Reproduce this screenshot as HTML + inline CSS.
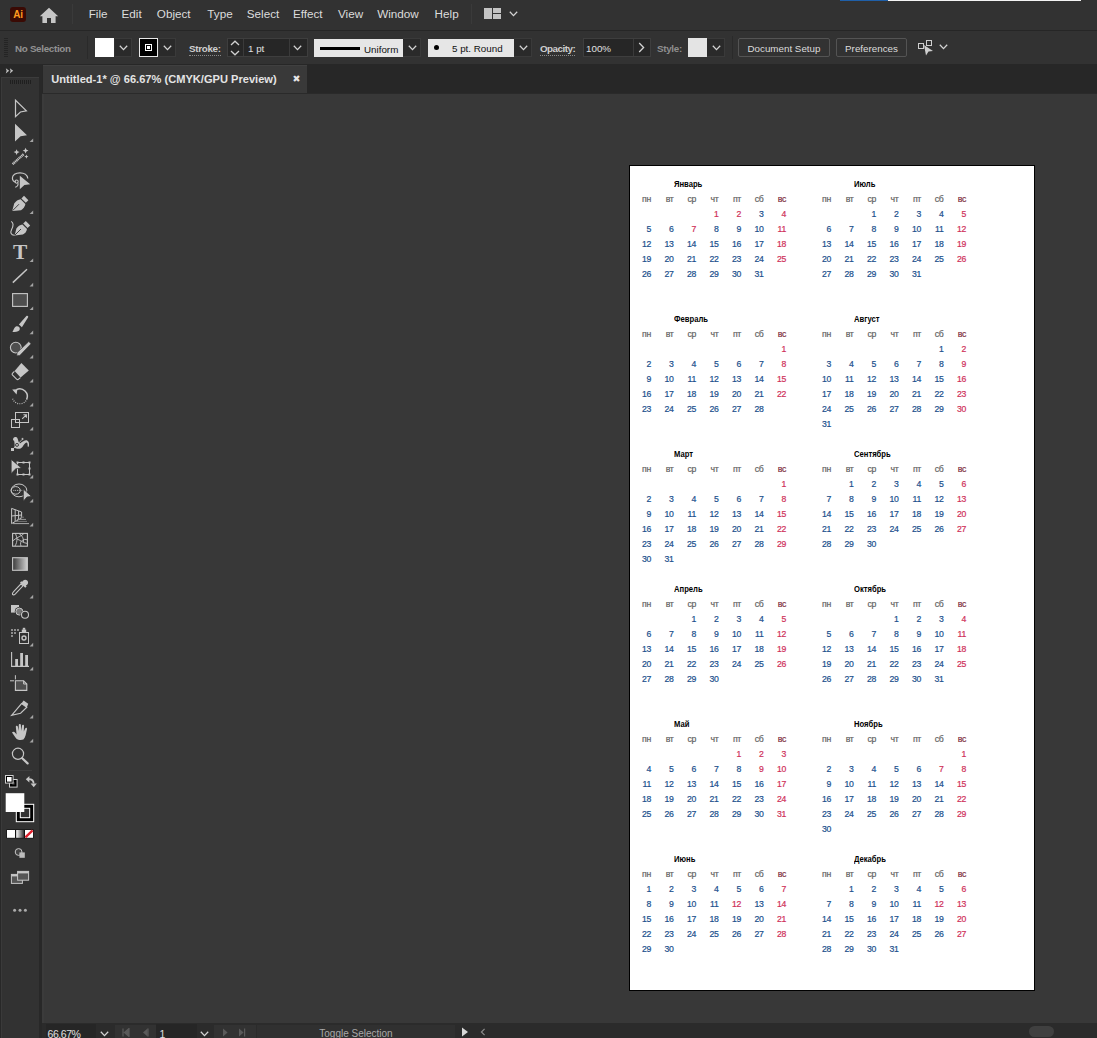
<!DOCTYPE html>
<html lang="ru"><head><meta charset="utf-8"><title>Untitled-1* @ 66.67% (CMYK/GPU Preview)</title>
<style>
*{box-sizing:border-box;margin:0;padding:0}
html,body{width:1097px;height:1038px;overflow:hidden;background:#383838}
body{position:relative;font-family:"Liberation Sans",sans-serif;color:#d8d8d8;font-size:12px}
.abs{position:absolute}
#menubar{position:absolute;left:0;top:0;width:1097px;height:30px;background:#323232}
#menubar .mi{position:absolute;top:4.7px;font-size:11.7px;line-height:18px;color:#dcdcdc;white-space:nowrap}
#ctrl{position:absolute;left:0;top:31px;width:1097px;height:33px;background:#323232}
#ctrl .t{position:absolute;top:11.8px;font-size:9.8px;line-height:12px;white-space:nowrap;color:#cfcfcf}
#ctrl .u{border-bottom:1px dotted #8a8a8a}
#ctrl .dd{position:absolute;top:7px;height:19px;background:#2a2a2a;border:1px solid #3a3a3a;border-left:none}
#ctrl .fld{position:absolute;top:7px;height:19px;background:#262626;border:1px solid #3e3e3e}
#ctrl .lt{position:absolute;top:8px;height:18px;background:#e6e6e6;color:#111}
.chev{position:absolute;width:9px;height:6px}
#tabbar{position:absolute;left:0;top:64px;width:1097px;height:30px;background:#272727}
#tab{position:absolute;left:42.500px;top:0.5px;width:264.500px;height:29.5px;background:#393939;border-top:1px solid #404040}
#tools{position:absolute;left:0;top:64px;width:42px;height:974px;background:#323232;border-right:1px solid #2a2a2a}
#canvas{position:absolute;left:42px;top:94px;width:1055px;border-left:2px solid #3b3b3b;height:929px;background:#383838}
#status{position:absolute;left:42px;top:1023px;width:1055px;height:15px;background:#2b2b2b}
#art{position:absolute;left:629px;top:165px;width:406px;height:826px;background:#fff;border:1px solid #000}
.mo{position:absolute;width:180px;height:120px;font-size:8.7px;line-height:10px}
.mt{position:absolute;left:45.1px;top:13.8px;font-size:9.8px;font-weight:bold;color:#000;white-space:nowrap;transform:scaleX(.78);transform-origin:0 0}
.c{position:absolute;width:22.5px;text-align:right;color:#1a4f8c;margin-left:-0.5px;-webkit-text-stroke:0.2px currentColor;white-space:nowrap;letter-spacing:-0.3px}
.c.r{color:#cf3059}
.c.w{color:#626262}
.c.w.s{color:#7e2f40}
</style></head><body>
<div id="menubar">
  <div class="abs" style="left:840px;top:0;width:48px;height:1px;background:#1f5fa8"></div>
  <div class="abs" style="left:888px;top:0;width:193px;height:1px;background:#f4f4f4"></div>
  <div class="abs" style="left:10px;top:7px;width:16px;height:15px;border-radius:3px;background:#3a0a04;color:#ff9a1f;font-weight:bold;font-size:10px;line-height:15px;text-align:center;letter-spacing:-0.3px">Ai</div>
  <svg class="abs" style="left:39px;top:7px" width="20" height="17" viewBox="0 0 20 17"><path d="M10 0.8 L0.8 9.2 H3.4 V16 H8 V11 H12 V16 H16.6 V9.2 H19.2 Z" fill="#c6c6c6"/></svg>
  <div class="abs" style="left:72px;top:4px;width:1px;height:20px;background:#3a3a3a"></div>
  <span class="mi" style="left:88.7px">File</span>
  <span class="mi" style="left:121.5px">Edit</span>
  <span class="mi" style="left:156.8px">Object</span>
  <span class="mi" style="left:207.3px">Type</span>
  <span class="mi" style="left:246.8px">Select</span>
  <span class="mi" style="left:292.9px">Effect</span>
  <span class="mi" style="left:338px">View</span>
  <span class="mi" style="left:377.2px">Window</span>
  <span class="mi" style="left:434.6px">Help</span>
  <div class="abs" style="left:471px;top:4px;width:1px;height:20px;background:#3a3a3a"></div>
  <div class="abs" style="left:484px;top:8px;width:8px;height:11px;background:#c4c4c4"></div>
  <div class="abs" style="left:493px;top:8px;width:8px;height:5px;background:#c4c4c4"></div>
  <div class="abs" style="left:493px;top:14px;width:8px;height:5px;background:#c4c4c4"></div>
  <svg class="chev" style="left:509px;top:11px" viewBox="0 0 9 6"><path d="M0.8 0.8 L4.5 4.6 L8.2 0.8" fill="none" stroke="#d4d4d4" stroke-width="1.300"/></svg>
</div>
<div class="abs" style="left:0;top:30px;width:1097px;height:1px;background:#262626"></div>
<div id="ctrl">
  <div class="abs" style="left:4px;top:7px;width:4px;height:19px;background:repeating-linear-gradient(#242424 0 1px,transparent 1px 2px)"></div>
  <span class="t" style="left:15px;color:#929292;font-weight:bold;letter-spacing:-0.3px">No Selection</span>
  <div class="abs" style="left:87px;top:5px;width:1px;height:23px;background:#2a2a2a"></div>
  <div class="abs" style="left:95px;top:7px;width:19px;height:19px;background:#fff"></div>
  <div class="dd" style="left:115px;width:17px"></div>
  <svg class="chev" style="left:119px;top:14px" viewBox="0 0 9 6"><path d="M0.8 0.8 L4.5 4.6 L8.2 0.8" fill="none" stroke="#d4d4d4" stroke-width="1.300"/></svg>
  <div class="abs" style="left:139px;top:7px;width:19px;height:19px;background:#000;border:1px solid #e8e8e8"></div>
  <div class="abs" style="left:145px;top:13px;width:7px;height:7px;border:1px solid #fff;background:#000"></div>
  <div class="abs" style="left:147px;top:15px;width:3px;height:3px;background:#fff"></div>
  <div class="dd" style="left:159px;width:17px"></div>
  <svg class="chev" style="left:163px;top:14px" viewBox="0 0 9 6"><path d="M0.8 0.8 L4.5 4.6 L8.2 0.8" fill="none" stroke="#d4d4d4" stroke-width="1.300"/></svg>
  <span class="t u" style="left:189px;font-weight:bold;letter-spacing:-0.3px">Stroke:</span>
  <div class="fld" style="left:227px;width:81px"></div>
  <div class="abs" style="left:243px;top:8px;width:1px;height:17px;background:#3a3a3a"></div>
  <div class="abs" style="left:289px;top:8px;width:1px;height:17px;background:#3a3a3a"></div>
  <svg class="abs" style="left:230px;top:9px" width="10" height="16" viewBox="0 0 10 16"><path d="M1 5 L5 1.2 L9 5 M1 11 L5 14.8 L9 11" fill="none" stroke="#d0d0d0" stroke-width="1.3"/></svg>
  <span class="t" style="left:248px;color:#e0e0e0">1 pt</span>
  <svg class="chev" style="left:293px;top:14px" viewBox="0 0 9 6"><path d="M0.8 0.8 L4.5 4.6 L8.2 0.8" fill="none" stroke="#d4d4d4" stroke-width="1.300"/></svg>
  <div class="lt" style="left:314px;width:89px"></div>
  <div class="abs" style="left:320px;top:16px;width:40px;height:3px;background:#000"></div>
  <span class="t" style="left:364px;top:12.800px;color:#111">Uniform</span>
  <div class="dd" style="left:403px;width:18px"></div>
  <svg class="chev" style="left:408px;top:14px" viewBox="0 0 9 6"><path d="M0.8 0.8 L4.5 4.6 L8.2 0.8" fill="none" stroke="#d4d4d4" stroke-width="1.300"/></svg>
  <div class="lt" style="left:428px;width:86px"></div>
  <div class="abs" style="left:434px;top:14px;width:5px;height:5px;border-radius:50%;background:#000"></div>
  <span class="t" style="left:452px;color:#111">5 pt. Round</span>
  <div class="dd" style="left:514px;width:18px"></div>
  <svg class="chev" style="left:519px;top:14px" viewBox="0 0 9 6"><path d="M0.8 0.8 L4.5 4.6 L8.2 0.8" fill="none" stroke="#d4d4d4" stroke-width="1.300"/></svg>
  <span class="t u" style="left:540px;font-weight:bold;letter-spacing:-0.5px">Opacity:</span>
  <div class="fld" style="left:583px;width:68px"></div>
  <div class="abs" style="left:633px;top:8px;width:1px;height:17px;background:#3a3a3a"></div>
  <span class="t" style="left:586px;color:#e0e0e0">100%</span>
  <svg class="abs" style="left:638px;top:11px" width="7" height="11" viewBox="0 0 7 11"><path d="M1.2 1 L5.6 5.5 L1.2 10" fill="none" stroke="#d4d4d4" stroke-width="1.300"/></svg>
  <span class="t" style="left:657px;color:#8f8f8f;font-weight:bold;letter-spacing:-0.3px">Style:</span>
  <div class="abs" style="left:688px;top:7px;width:19px;height:19px;background:#e4e4e4"></div>
  <div class="dd" style="left:707px;width:18px"></div>
  <svg class="chev" style="left:712px;top:14px" viewBox="0 0 9 6"><path d="M0.8 0.8 L4.5 4.6 L8.2 0.8" fill="none" stroke="#d4d4d4" stroke-width="1.300"/></svg>
  <div class="abs" style="left:732px;top:5px;width:1px;height:23px;background:#2a2a2a"></div>
  <div class="abs" style="left:738px;top:7px;width:92px;height:19px;border:1px solid #545454;border-radius:2px;font-size:9.8px;line-height:19px;text-align:center;color:#dcdcdc">Document Setup</div>
  <div class="abs" style="left:836px;top:7px;width:71px;height:19px;border:1px solid #545454;border-radius:2px;font-size:9.8px;line-height:19px;text-align:center;color:#dcdcdc">Preferences</div>
  <svg class="abs" style="left:916px;top:7px" width="19" height="19" viewBox="0 0 19 19"><rect x="2.5" y="5.5" width="5" height="5" fill="none" stroke="#cfcfcf"/><rect x="10.500" y="2.500" width="5" height="5" fill="none" stroke="#cfcfcf"/><path d="M8 7 L17 13 L12.500 13.500 L10 17.500 Z" fill="#cfcfcf"/></svg>
  <svg class="chev" style="left:939px;top:13px" viewBox="0 0 9 6"><path d="M0.8 0.8 L4.5 4.6 L8.2 0.8" fill="none" stroke="#d4d4d4" stroke-width="1.300"/></svg>
</div>
<div id="tabbar">
  <div id="tab"></div>
  <span class="abs" style="left:51.3px;top:8px;font-size:11.1px;line-height:14px;font-weight:bold;color:#e4e4e4;white-space:nowrap">Untitled-1* @ 66.67% (CMYK/GPU Preview)</span>
  <span class="abs" style="left:292.600px;top:8px;font-size:9.500px;line-height:14px;font-family:'DejaVu Sans',sans-serif;color:#e6e6e6">✖</span>
</div>
<div class="abs" style="left:0;top:93px;width:1097px;height:1px;background:#2a2a2a"></div>
<div id="canvas"></div>
<div class="abs" style="left:0;top:64px;width:42px;height:974px;background:#282828"></div>
<div class="abs" style="left:1px;top:77px;width:38px;height:961px;background:#323232;border-top:1px solid #3c3c3c;border-left:1px solid #3a3a3a"></div>
<div class="abs" style="left:10px;top:80px;width:21px;height:4px;background:repeating-linear-gradient(90deg,#1f1f1f 0 1px,transparent 1px 2px)"></div>
<svg class="abs" style="left:5px;top:68px" width="10" height="6" viewBox="0 0 10 6"><path d="M0.800 0.200 L4.200 2.800 L0.800 5.400 L1.600 2.800 Z M4.800 0.200 L8.200 2.800 L4.800 5.400 L5.600 2.800 Z" fill="#c0c0c0"/></svg>
<svg class="abs" style="left:0;top:0" width="44" height="1038" viewBox="0 0 44 1038">
<path d="M15.5 100.2 L26.4 110.9 L20.4 112 L15.5 116.6 Z" fill="none" stroke="#c6c6c6" stroke-width="1.2" stroke-linejoin="miter"/>
<path d="M15 123.8 L27 135.2 L20.6 136.2 L15 141.4 Z" fill="#c6c6c6"/><path d="M33.2 138.4 V142.0 H29.6 Z" fill="#a4a4a4"/>
<path d="M12.6 164.2 L23.6 154.2" stroke="#c6c6c6" stroke-width="2.4" stroke-dasharray="1.2 0.5"/><path d="M16.6 149.2 l0.9 2 2.1 0.9 -2.1 0.9 -0.9 2.1 -0.9 -2.1 -2.1 -0.9 2.1 -0.9z M25.6 147.8 l0.9 1.9 2 0.9 -2 0.9 -0.9 2 -0.9 -2 -2 -0.9 2 -0.9z M26.4 154.6 l0.6 1.4 1.5 0.6 -1.5 0.6 -0.6 1.5 -0.6 -1.5 -1.5 -0.6 1.5 -0.6z" fill="#c6c6c6"/>
<path d="M27.8 178.5 C27.5 174.8 24 172.8 20 172.8 C15.5 172.800 12.4 175.200 12.4 178 C12.4 180.300 14 181.800 16 182.200" fill="none" stroke="#c6c6c6" stroke-width="1.2"/><circle cx="16.600" cy="181.600" r="1.6" fill="none" stroke="#c6c6c6" stroke-width="1.1"/><path d="M17.800 182.600 C18.600 184.600 17.600 186.600 15.200 187.200" fill="none" stroke="#c6c6c6" stroke-width="1.1"/><path d="M19.800 175.800 L30.200 184.200 L24.400 185 L19.800 189.200 Z" fill="#c6c6c6"/>
<path d="M12.200 211 L14.200 203.600 C15.600 201 18.400 199.600 20.600 199.200 L25.400 204 C25 206.400 23.400 209 21 210.200 Z" fill="#c6c6c6"/><path d="M21.400 198.400 L24 195.800 L28.400 200.200 L25.800 202.800 Z" fill="#c6c6c6"/><path d="M12.600 210.600 L19 204.200" stroke="#333" stroke-width="0.9"/><path d="M33.2 210.4 V214.0 H29.6 Z" fill="#a4a4a4"/>
<path d="M14.600 235.400 L16.400 228.400 C17.800 226 20.200 224.800 22.400 224.400 L27 229 C26.600 231.200 25.200 233.600 22.800 234.600 Z" fill="#c6c6c6"/><path d="M23.200 223.600 L25.800 221 L30.200 225.400 L27.600 228 Z" fill="#c6c6c6"/><path d="M15 235 L21 229" stroke="#333" stroke-width="0.9"/><path d="M11.200 221.400 C14.400 223.400 13.200 226.400 11.600 229.400 C10 232.600 11 235.400 14.600 235.200" fill="none" stroke="#c6c6c6" stroke-width="1.1"/>
<text x="20.100" y="258.900" font-family="Liberation Serif, serif" font-size="20.600" font-weight="bold" text-anchor="middle" fill="#c6c6c6" transform="translate(20.100 0) scale(1.040 1) translate(-20.100 0)">T</text><path d="M33.2 258.4 V262.0 H29.6 Z" fill="#a4a4a4"/>
<path d="M12.800 282.600 L27 269.200" stroke="#c6c6c6" stroke-width="1.5"/><path d="M33.2 282.8 V286.4 H29.6 Z" fill="#a4a4a4"/>
<rect x="12.600" y="293.600" width="14.800" height="12.800" fill="#4e4e4e" stroke="#c6c6c6" stroke-width="1.1"/><path d="M33.2 306.4 V310.0 H29.6 Z" fill="#a4a4a4"/>
<path d="M18.900 324.600 L26.400 316 C27.400 315 28.800 316.200 28 317.400 L21.900 327.200 Z" fill="#c6c6c6"/><path d="M12.200 331.800 C13.800 330.800 13.600 327.600 16 326.400 C17.800 325.600 20.200 327 19.800 329.200 C19.400 331.400 16 332.400 12.200 331.800 Z" fill="#c6c6c6"/><path d="M33.2 330.6 V334.2 H29.6 Z" fill="#a4a4a4"/>
<circle cx="15.800" cy="347.600" r="5.400" fill="#4e4e4e" stroke="#c6c6c6" stroke-width="1.1"/><path d="M17 352.800 L28.800 341.600 L31 343.800 L19.800 355.400 L16.800 355.800 Z" fill="#c6c6c6" stroke="#333" stroke-width="0.600"/><path d="M33.2 354.8 V358.4 H29.6 Z" fill="#a4a4a4"/>
<path d="M21.400 363 L28.800 370.400 L20.600 377.600 L14.600 371 Z" fill="#c6c6c6"/><path d="M14.400 371.400 L12.600 373.200 C12 373.800 12 374.600 12.600 375.200 L16.600 379.200 C17.200 379.800 18 379.800 18.600 379.200 L20.400 377.600" fill="none" stroke="#c6c6c6" stroke-width="1.100"/><path d="M33.2 378.8 V382.4 H29.6 Z" fill="#a4a4a4"/>
<path d="M16.400 389.600 A7.600 7.600 0 0 1 26.600 399.600" fill="none" stroke="#c6c6c6" stroke-width="1.500"/><path d="M26 400.600 A7.600 7.600 0 0 1 12.400 397.800" fill="none" stroke="#c6c6c6" stroke-width="1.200" stroke-dasharray="0.900 1.300"/><path d="M12.200 389.400 L17.400 389.200 L16.600 394.600 Z" fill="#c6c6c6"/><path d="M33.2 402.8 V406.4 H29.6 Z" fill="#a4a4a4"/>
<rect x="15.500" y="412.500" width="13" height="10" fill="none" stroke="#c6c6c6" stroke-width="1"/><rect x="11.500" y="419.500" width="8" height="8" fill="none" stroke="#c6c6c6" stroke-width="1"/><path d="M22.200 418.800 L26 415.200 M23.400 414.800 H26.400 V417.800" fill="none" stroke="#c6c6c6" stroke-width="1.100"/><path d="M33.2 426.8 V430.4 H29.6 Z" fill="#a4a4a4"/>
<path d="M13.200 440.800 C12.400 438 14.200 436.600 16 437 C17.600 437.400 18 439.600 18.600 441.800 C19 443 19.600 443.600 20.600 443 C22.600 441.400 25.200 439.600 27.200 440.400 C29 441.200 29.400 443.800 28.800 446.800 L27.600 446.600 C27.800 444.400 27.600 442.800 26.600 442.600 C25 442.600 24 445 22.400 447 C21 448.800 18.600 449.200 16.400 448.600 L14.400 447.800 C14.800 445.600 14.600 443 14.200 441.200 C14 440.200 13.600 439.800 13.200 440.800 Z" fill="#c6c6c6"/><path d="M13.400 448.600 L22.600 439" stroke="#c6c6c6" stroke-width="0.900"/><circle cx="17" cy="444.900" r="1.500" fill="#c6c6c6" stroke="#333" stroke-width="0.900"/><circle cx="22.500" cy="439" r="1.300" fill="#c6c6c6" stroke="#333" stroke-width="0.600"/><rect x="11" y="448" width="3" height="3" fill="#c6c6c6"/><path d="M33.2 450.8 V454.4 H29.6 Z" fill="#a4a4a4"/>
<rect x="17.500" y="462.500" width="12" height="12" fill="none" stroke="#c6c6c6" stroke-width="1"/><path d="M16.500 461.500 h2 v2 h-2z M22.500 461.500 h2 v2 h-2z M28.500 461.500 h2 v2 h-2z M28.500 467.500 h2 v2 h-2z M28.500 473.500 h2 v2 h-2z M22.500 473.500 h2 v2 h-2z M16.500 473.500 h2 v2 h-2z" fill="#c6c6c6"/><path d="M11.200 459.400 L21.400 468 L15.800 468.800 L11.200 473.400 Z" fill="#c6c6c6" stroke="#323232" stroke-width="0.700"/><path d="M33.2 474.8 V478.4 H29.6 Z" fill="#a4a4a4"/>
<ellipse cx="19" cy="490.400" rx="7.800" ry="6.400" fill="none" stroke="#c6c6c6" stroke-width="1"/><ellipse cx="15.700" cy="490.400" rx="4.600" ry="3.800" fill="none" stroke="#c6c6c6" stroke-width="1"/><path d="M13.400 490.400 H22.600" stroke="#c6c6c6" stroke-width="1" stroke-dasharray="0.900 0.900"/><path d="M23.300 489 L31.600 496.400 L27 497 L23.300 501.200 Z" fill="#c6c6c6" stroke="#323232" stroke-width="0.800"/><path d="M33.2 498.8 V502.4 H29.6 Z" fill="#a4a4a4"/>
<path d="M11.600 508.400 L21.600 512 V518 L11.600 523.600 Z M15.200 509.800 V521.600 M18.600 511 V519.600 M11.600 516 L21.600 515" fill="none" stroke="#c6c6c6" stroke-width="1"/><path d="M20 517.200 H24" stroke="#777" stroke-width="1"/><path d="M17 519.400 H26" stroke="#999" stroke-width="1"/><path d="M13 523.600 H29" stroke="#aaa" stroke-width="1"/><path d="M15 521.400 H27" stroke="#888" stroke-width="0.800"/><path d="M33.2 522.8 V526.4 H29.6 Z" fill="#a4a4a4"/>
<rect x="12.600" y="533.400" width="14.800" height="12.800" fill="none" stroke="#c6c6c6" stroke-width="1.100"/><path d="M12.600 541 C17 537 22 536 24 533.400 M15 546 C18 541 17 537 15.400 533.600 M21 546 C19 541 24 538 27.400 540 M17 539 C20 540 23 543 27 543.400 M19 533.600 C22 535 24 539 23.600 542" fill="none" stroke="#c6c6c6" stroke-width="0.900"/>
<defs><linearGradient id="gg" x1="0" x2="1" y1="0" y2="0"><stop offset="0" stop-color="#3a3a3a"/><stop offset="1" stop-color="#d0d0d0"/></linearGradient></defs><rect x="12.600" y="557.700" width="14.800" height="12.600" fill="url(#gg)" stroke="#c6c6c6" stroke-width="1.100"/>
<path d="M12.600 594.600 C12 593.600 12.600 592.600 13.400 591.800 L21 583.800 L23 585.800 L15.400 593.800 C14.600 594.600 13.600 595.200 12.600 594.600 Z" fill="none" stroke="#c6c6c6" stroke-width="1.100"/><path d="M20 582.600 L21.400 581.200 L22.200 582 C22.800 580 25.400 578.800 27.200 580.600 C29 582.400 27.800 585 25.800 585.600 L26.600 586.400 L25.200 587.800 Z" fill="#c6c6c6"/><path d="M33.2 594.8 V598.4 H29.6 Z" fill="#a4a4a4"/>
<rect x="11" y="605" width="8" height="7.600" fill="#c6c6c6"/><circle cx="19.400" cy="611.600" r="4.600" fill="#323232"/><circle cx="19.400" cy="611.600" r="3.500" fill="#777" stroke="#c6c6c6" stroke-width="1"/><circle cx="25" cy="614.800" r="4.600" fill="#323232"/><circle cx="25" cy="614.800" r="3.500" fill="#323232" stroke="#c6c6c6" stroke-width="1.100"/>
<rect x="19.500" y="632.500" width="9" height="11" fill="none" stroke="#c6c6c6" stroke-width="1"/><rect x="21.800" y="629.600" width="4.400" height="3" fill="#c6c6c6"/><rect x="22.800" y="627.800" width="2.400" height="2" fill="#c6c6c6"/><circle cx="24" cy="638" r="2" fill="none" stroke="#c6c6c6" stroke-width="1.400"/><path d="M11 629 h2 v2 h-2z M14 629 h2 v2 h-2z M17 629 h2 v2 h-2z M11 632 h2 v2 h-2z M14 632 h2 v2 h-2z M11 635 h2 v2 h-2z" fill="#8c8c8c"/><path d="M33.2 642.8 V646.4 H29.6 Z" fill="#a4a4a4"/>
<path d="M11.600 652 V666.400 H29" fill="none" stroke="#c6c6c6" stroke-width="1.100"/><rect x="15.200" y="659" width="2.800" height="7" fill="#c6c6c6"/><rect x="20.200" y="653" width="2.800" height="13" fill="#c6c6c6"/><rect x="25.200" y="655" width="2.800" height="11" fill="#c6c6c6"/><path d="M33.2 666.8 V670.4 H29.6 Z" fill="#a4a4a4"/>
<path d="M15.400 680.800 H23.600 L26.800 684 V690.400 H15.400 Z" fill="#4e4e4e" stroke="#c6c6c6" stroke-width="1.100"/><path d="M23.600 680.800 V684 H26.800" fill="none" stroke="#c6c6c6" stroke-width="1"/><path d="M15.400 675.200 V679.400 M10 680.800 H14" stroke="#c6c6c6" stroke-width="1"/>
<path d="M11.600 715.400 L21.600 703.600 L26.800 707.200 L20.600 713.200 Z" fill="none" stroke="#c6c6c6" stroke-width="1.100"/><path d="M21.400 703.400 L23.600 700.600 L28.200 703.800 L26.800 707.400 Z" fill="#c6c6c6"/><path d="M33.2 714.8 V718.4 H29.6 Z" fill="#a4a4a4"/>
<path d="M18.400 739.800 C16 739 14.600 736 12 732.400 C13 731.400 14.400 731.800 15.400 733 L16.600 734.600 L15.800 726.800 C15.700 725.400 17.500 725.200 17.800 726.600 L18.600 731 L18.800 725 C18.800 723.600 20.800 723.600 20.900 725 L21.200 731 L22 725.800 C22.200 724.400 24.100 724.600 24 726 L23.800 731.600 L25.200 728.400 C25.800 727.200 27.400 727.800 27 729.200 C26 733 25.800 737 23.400 739.600 C22 740.200 20 740.200 18.400 739.800 Z" fill="#c6c6c6"/><path d="M33.2 738.8 V742.4 H29.6 Z" fill="#a4a4a4"/>
<circle cx="18" cy="753.800" r="5.600" fill="none" stroke="#c6c6c6" stroke-width="1.200"/><path d="M22.200 758.200 L27.600 763.400" stroke="#c6c6c6" stroke-width="2.200" stroke-linecap="round"/>
<path d="M9 770.500 H32" stroke="#3e3e3e" stroke-width="1"/>
<rect x="9.500" y="779.500" width="7.600" height="7.600" fill="#000" stroke="#d0d0d0" stroke-width="1"/><rect x="12.200" y="782.200" width="2.400" height="2.400" fill="#444"/><rect x="5.500" y="775.500" width="7.600" height="7.600" fill="#000" stroke="#d0d0d0" stroke-width="1"/><rect x="7" y="777" width="4.600" height="4.600" fill="#fff"/>
<path d="M28.600 779.200 C31.600 779.200 33.600 781 33.600 783.600" fill="none" stroke="#c6c6c6" stroke-width="1.800"/><path d="M25.800 779.200 L29.400 776 V782.400 Z" fill="#c6c6c6"/><path d="M30.600 783.400 H36.800 L33.700 787.200 Z" fill="#c6c6c6"/>
<rect x="16.300" y="804.300" width="17.400" height="17.400" fill="#000" stroke="#fff" stroke-width="1"/><rect x="20.300" y="808.300" width="9.400" height="9.400" fill="#323232" stroke="#fff" stroke-width="1"/>
<rect x="5.700" y="793.200" width="18.600" height="18.800" fill="#fff"/>
<rect x="6.400" y="829.400" width="27.200" height="9" fill="#111"/><rect x="7" y="830" width="8" height="7.800" fill="#fff"/><rect x="16.200" y="830" width="7.800" height="7.800" fill="url(#g2)"/><defs><linearGradient id="g2" x1="0" x2="1"><stop offset="0" stop-color="#fff"/><stop offset="1" stop-color="#333"/></linearGradient></defs><rect x="25" y="830" width="8" height="7.800" fill="#fff"/><path d="M25.400 837.400 L32.600 830.400" stroke="#e0202c" stroke-width="2.300"/>
<circle cx="18.600" cy="852" r="3.400" fill="#444" stroke="#c6c6c6" stroke-width="1"/><rect x="19.400" y="852.400" width="5.400" height="5.400" fill="#bdbdbd"/>
<rect x="11.400" y="874.400" width="11" height="9" fill="#555" stroke="#c6c6c6" stroke-width="1"/><rect x="11.400" y="874.400" width="11" height="2" fill="#c6c6c6"/><rect x="17.600" y="871.400" width="11" height="8.800" fill="#555" stroke="#c6c6c6" stroke-width="1"/><rect x="17.600" y="871.400" width="11" height="2" fill="#c6c6c6"/>
<circle cx="14.600" cy="910.200" r="1.500" fill="#ababab"/><circle cx="20" cy="910.200" r="1.500" fill="#ababab"/><circle cx="25.400" cy="910.200" r="1.500" fill="#ababab"/>
</svg>
<div id="art"></div>
<div class="mo" style="left:629px;top:165px">
<div class="mt">Январь</div>
<span class="c w" style="left:0.0px;top:28.8px">пн</span><span class="c w" style="left:22.5px;top:28.8px">вт</span><span class="c w" style="left:45.0px;top:28.8px">ср</span><span class="c w" style="left:67.5px;top:28.8px">чт</span><span class="c w" style="left:90.0px;top:28.8px">пт</span><span class="c w" style="left:112.5px;top:28.8px">сб</span><span class="c w s" style="left:135.0px;top:28.8px">вс</span><span class="c r" style="left:67.5px;top:43.8px">1</span><span class="c r" style="left:90.0px;top:43.8px">2</span><span class="c" style="left:112.5px;top:43.8px">3</span><span class="c r" style="left:135.0px;top:43.8px">4</span><span class="c" style="left:0.0px;top:58.8px">5</span><span class="c" style="left:22.5px;top:58.8px">6</span><span class="c r" style="left:45.0px;top:58.8px">7</span><span class="c" style="left:67.5px;top:58.8px">8</span><span class="c" style="left:90.0px;top:58.8px">9</span><span class="c" style="left:112.5px;top:58.8px">10</span><span class="c r" style="left:135.0px;top:58.8px">11</span><span class="c" style="left:0.0px;top:73.8px">12</span><span class="c" style="left:22.5px;top:73.8px">13</span><span class="c" style="left:45.0px;top:73.8px">14</span><span class="c" style="left:67.5px;top:73.8px">15</span><span class="c" style="left:90.0px;top:73.8px">16</span><span class="c" style="left:112.5px;top:73.8px">17</span><span class="c r" style="left:135.0px;top:73.8px">18</span><span class="c" style="left:0.0px;top:88.8px">19</span><span class="c" style="left:22.5px;top:88.8px">20</span><span class="c" style="left:45.0px;top:88.8px">21</span><span class="c" style="left:67.5px;top:88.8px">22</span><span class="c" style="left:90.0px;top:88.8px">23</span><span class="c" style="left:112.5px;top:88.8px">24</span><span class="c r" style="left:135.0px;top:88.8px">25</span><span class="c" style="left:0.0px;top:103.8px">26</span><span class="c" style="left:22.5px;top:103.8px">27</span><span class="c" style="left:45.0px;top:103.8px">28</span><span class="c" style="left:67.5px;top:103.8px">29</span><span class="c" style="left:90.0px;top:103.8px">30</span><span class="c" style="left:112.5px;top:103.8px">31</span>
</div>
<div class="mo" style="left:629px;top:300px">
<div class="mt">Февраль</div>
<span class="c w" style="left:0.0px;top:28.8px">пн</span><span class="c w" style="left:22.5px;top:28.8px">вт</span><span class="c w" style="left:45.0px;top:28.8px">ср</span><span class="c w" style="left:67.5px;top:28.8px">чт</span><span class="c w" style="left:90.0px;top:28.8px">пт</span><span class="c w" style="left:112.5px;top:28.8px">сб</span><span class="c w s" style="left:135.0px;top:28.8px">вс</span><span class="c r" style="left:135.0px;top:43.8px">1</span><span class="c" style="left:0.0px;top:58.8px">2</span><span class="c" style="left:22.5px;top:58.8px">3</span><span class="c" style="left:45.0px;top:58.8px">4</span><span class="c" style="left:67.5px;top:58.8px">5</span><span class="c" style="left:90.0px;top:58.8px">6</span><span class="c" style="left:112.5px;top:58.8px">7</span><span class="c r" style="left:135.0px;top:58.8px">8</span><span class="c" style="left:0.0px;top:73.8px">9</span><span class="c" style="left:22.5px;top:73.8px">10</span><span class="c" style="left:45.0px;top:73.8px">11</span><span class="c" style="left:67.5px;top:73.8px">12</span><span class="c" style="left:90.0px;top:73.8px">13</span><span class="c" style="left:112.5px;top:73.8px">14</span><span class="c r" style="left:135.0px;top:73.8px">15</span><span class="c" style="left:0.0px;top:88.8px">16</span><span class="c" style="left:22.5px;top:88.8px">17</span><span class="c" style="left:45.0px;top:88.8px">18</span><span class="c" style="left:67.5px;top:88.8px">19</span><span class="c" style="left:90.0px;top:88.8px">20</span><span class="c" style="left:112.5px;top:88.8px">21</span><span class="c r" style="left:135.0px;top:88.8px">22</span><span class="c" style="left:0.0px;top:103.8px">23</span><span class="c" style="left:22.5px;top:103.8px">24</span><span class="c" style="left:45.0px;top:103.8px">25</span><span class="c" style="left:67.5px;top:103.8px">26</span><span class="c" style="left:90.0px;top:103.8px">27</span><span class="c" style="left:112.5px;top:103.8px">28</span>
</div>
<div class="mo" style="left:629px;top:435px">
<div class="mt">Март</div>
<span class="c w" style="left:0.0px;top:28.8px">пн</span><span class="c w" style="left:22.5px;top:28.8px">вт</span><span class="c w" style="left:45.0px;top:28.8px">ср</span><span class="c w" style="left:67.5px;top:28.8px">чт</span><span class="c w" style="left:90.0px;top:28.8px">пт</span><span class="c w" style="left:112.5px;top:28.8px">сб</span><span class="c w s" style="left:135.0px;top:28.8px">вс</span><span class="c r" style="left:135.0px;top:43.8px">1</span><span class="c" style="left:0.0px;top:58.8px">2</span><span class="c" style="left:22.5px;top:58.8px">3</span><span class="c" style="left:45.0px;top:58.8px">4</span><span class="c" style="left:67.5px;top:58.8px">5</span><span class="c" style="left:90.0px;top:58.8px">6</span><span class="c" style="left:112.5px;top:58.8px">7</span><span class="c r" style="left:135.0px;top:58.8px">8</span><span class="c" style="left:0.0px;top:73.8px">9</span><span class="c" style="left:22.5px;top:73.8px">10</span><span class="c" style="left:45.0px;top:73.8px">11</span><span class="c" style="left:67.5px;top:73.8px">12</span><span class="c" style="left:90.0px;top:73.8px">13</span><span class="c" style="left:112.5px;top:73.8px">14</span><span class="c r" style="left:135.0px;top:73.8px">15</span><span class="c" style="left:0.0px;top:88.8px">16</span><span class="c" style="left:22.5px;top:88.8px">17</span><span class="c" style="left:45.0px;top:88.8px">18</span><span class="c" style="left:67.5px;top:88.8px">19</span><span class="c" style="left:90.0px;top:88.8px">20</span><span class="c" style="left:112.5px;top:88.8px">21</span><span class="c r" style="left:135.0px;top:88.8px">22</span><span class="c" style="left:0.0px;top:103.8px">23</span><span class="c" style="left:22.5px;top:103.8px">24</span><span class="c" style="left:45.0px;top:103.8px">25</span><span class="c" style="left:67.5px;top:103.8px">26</span><span class="c" style="left:90.0px;top:103.8px">27</span><span class="c" style="left:112.5px;top:103.8px">28</span><span class="c r" style="left:135.0px;top:103.8px">29</span><span class="c" style="left:0.0px;top:118.8px">30</span><span class="c" style="left:22.5px;top:118.8px">31</span>
</div>
<div class="mo" style="left:629px;top:570px">
<div class="mt">Апрель</div>
<span class="c w" style="left:0.0px;top:28.8px">пн</span><span class="c w" style="left:22.5px;top:28.8px">вт</span><span class="c w" style="left:45.0px;top:28.8px">ср</span><span class="c w" style="left:67.5px;top:28.8px">чт</span><span class="c w" style="left:90.0px;top:28.8px">пт</span><span class="c w" style="left:112.5px;top:28.8px">сб</span><span class="c w s" style="left:135.0px;top:28.8px">вс</span><span class="c" style="left:45.0px;top:43.8px">1</span><span class="c" style="left:67.5px;top:43.8px">2</span><span class="c" style="left:90.0px;top:43.8px">3</span><span class="c" style="left:112.5px;top:43.8px">4</span><span class="c r" style="left:135.0px;top:43.8px">5</span><span class="c" style="left:0.0px;top:58.8px">6</span><span class="c" style="left:22.5px;top:58.8px">7</span><span class="c" style="left:45.0px;top:58.8px">8</span><span class="c" style="left:67.5px;top:58.8px">9</span><span class="c" style="left:90.0px;top:58.8px">10</span><span class="c" style="left:112.5px;top:58.8px">11</span><span class="c r" style="left:135.0px;top:58.8px">12</span><span class="c" style="left:0.0px;top:73.8px">13</span><span class="c" style="left:22.5px;top:73.8px">14</span><span class="c" style="left:45.0px;top:73.8px">15</span><span class="c" style="left:67.5px;top:73.8px">16</span><span class="c" style="left:90.0px;top:73.8px">17</span><span class="c" style="left:112.5px;top:73.8px">18</span><span class="c r" style="left:135.0px;top:73.8px">19</span><span class="c" style="left:0.0px;top:88.8px">20</span><span class="c" style="left:22.5px;top:88.8px">21</span><span class="c" style="left:45.0px;top:88.8px">22</span><span class="c" style="left:67.5px;top:88.8px">23</span><span class="c" style="left:90.0px;top:88.8px">24</span><span class="c" style="left:112.5px;top:88.8px">25</span><span class="c r" style="left:135.0px;top:88.8px">26</span><span class="c" style="left:0.0px;top:103.8px">27</span><span class="c" style="left:22.5px;top:103.8px">28</span><span class="c" style="left:45.0px;top:103.8px">29</span><span class="c" style="left:67.5px;top:103.8px">30</span>
</div>
<div class="mo" style="left:629px;top:705px">
<div class="mt">Май</div>
<span class="c w" style="left:0.0px;top:28.8px">пн</span><span class="c w" style="left:22.5px;top:28.8px">вт</span><span class="c w" style="left:45.0px;top:28.8px">ср</span><span class="c w" style="left:67.5px;top:28.8px">чт</span><span class="c w" style="left:90.0px;top:28.8px">пт</span><span class="c w" style="left:112.5px;top:28.8px">сб</span><span class="c w s" style="left:135.0px;top:28.8px">вс</span><span class="c r" style="left:90.0px;top:43.8px">1</span><span class="c r" style="left:112.5px;top:43.8px">2</span><span class="c r" style="left:135.0px;top:43.8px">3</span><span class="c" style="left:0.0px;top:58.8px">4</span><span class="c" style="left:22.5px;top:58.8px">5</span><span class="c" style="left:45.0px;top:58.8px">6</span><span class="c" style="left:67.5px;top:58.8px">7</span><span class="c" style="left:90.0px;top:58.8px">8</span><span class="c r" style="left:112.5px;top:58.8px">9</span><span class="c r" style="left:135.0px;top:58.8px">10</span><span class="c" style="left:0.0px;top:73.8px">11</span><span class="c" style="left:22.5px;top:73.8px">12</span><span class="c" style="left:45.0px;top:73.8px">13</span><span class="c" style="left:67.5px;top:73.8px">14</span><span class="c" style="left:90.0px;top:73.8px">15</span><span class="c" style="left:112.5px;top:73.8px">16</span><span class="c r" style="left:135.0px;top:73.8px">17</span><span class="c" style="left:0.0px;top:88.8px">18</span><span class="c" style="left:22.5px;top:88.8px">19</span><span class="c" style="left:45.0px;top:88.8px">20</span><span class="c" style="left:67.5px;top:88.8px">21</span><span class="c" style="left:90.0px;top:88.8px">22</span><span class="c" style="left:112.5px;top:88.8px">23</span><span class="c r" style="left:135.0px;top:88.8px">24</span><span class="c" style="left:0.0px;top:103.8px">25</span><span class="c" style="left:22.5px;top:103.8px">26</span><span class="c" style="left:45.0px;top:103.8px">27</span><span class="c" style="left:67.5px;top:103.8px">28</span><span class="c" style="left:90.0px;top:103.8px">29</span><span class="c" style="left:112.5px;top:103.8px">30</span><span class="c r" style="left:135.0px;top:103.8px">31</span>
</div>
<div class="mo" style="left:629px;top:840px">
<div class="mt">Июнь</div>
<span class="c w" style="left:0.0px;top:28.8px">пн</span><span class="c w" style="left:22.5px;top:28.8px">вт</span><span class="c w" style="left:45.0px;top:28.8px">ср</span><span class="c w" style="left:67.5px;top:28.8px">чт</span><span class="c w" style="left:90.0px;top:28.8px">пт</span><span class="c w" style="left:112.5px;top:28.8px">сб</span><span class="c w s" style="left:135.0px;top:28.8px">вс</span><span class="c" style="left:0.0px;top:43.8px">1</span><span class="c" style="left:22.5px;top:43.8px">2</span><span class="c" style="left:45.0px;top:43.8px">3</span><span class="c" style="left:67.5px;top:43.8px">4</span><span class="c" style="left:90.0px;top:43.8px">5</span><span class="c" style="left:112.5px;top:43.8px">6</span><span class="c r" style="left:135.0px;top:43.8px">7</span><span class="c" style="left:0.0px;top:58.8px">8</span><span class="c" style="left:22.5px;top:58.8px">9</span><span class="c" style="left:45.0px;top:58.8px">10</span><span class="c" style="left:67.5px;top:58.8px">11</span><span class="c r" style="left:90.0px;top:58.8px">12</span><span class="c" style="left:112.5px;top:58.8px">13</span><span class="c r" style="left:135.0px;top:58.8px">14</span><span class="c" style="left:0.0px;top:73.8px">15</span><span class="c" style="left:22.5px;top:73.8px">16</span><span class="c" style="left:45.0px;top:73.8px">17</span><span class="c" style="left:67.5px;top:73.8px">18</span><span class="c" style="left:90.0px;top:73.8px">19</span><span class="c" style="left:112.5px;top:73.8px">20</span><span class="c r" style="left:135.0px;top:73.8px">21</span><span class="c" style="left:0.0px;top:88.8px">22</span><span class="c" style="left:22.5px;top:88.8px">23</span><span class="c" style="left:45.0px;top:88.8px">24</span><span class="c" style="left:67.5px;top:88.8px">25</span><span class="c" style="left:90.0px;top:88.8px">26</span><span class="c" style="left:112.5px;top:88.8px">27</span><span class="c r" style="left:135.0px;top:88.8px">28</span><span class="c" style="left:0.0px;top:103.8px">29</span><span class="c" style="left:22.5px;top:103.8px">30</span>
</div>
<div class="mo" style="left:809px;top:165px">
<div class="mt">Июль</div>
<span class="c w" style="left:0.0px;top:28.8px">пн</span><span class="c w" style="left:22.5px;top:28.8px">вт</span><span class="c w" style="left:45.0px;top:28.8px">ср</span><span class="c w" style="left:67.5px;top:28.8px">чт</span><span class="c w" style="left:90.0px;top:28.8px">пт</span><span class="c w" style="left:112.5px;top:28.8px">сб</span><span class="c w s" style="left:135.0px;top:28.8px">вс</span><span class="c" style="left:45.0px;top:43.8px">1</span><span class="c" style="left:67.5px;top:43.8px">2</span><span class="c" style="left:90.0px;top:43.8px">3</span><span class="c" style="left:112.5px;top:43.8px">4</span><span class="c r" style="left:135.0px;top:43.8px">5</span><span class="c" style="left:0.0px;top:58.8px">6</span><span class="c" style="left:22.5px;top:58.8px">7</span><span class="c" style="left:45.0px;top:58.8px">8</span><span class="c" style="left:67.5px;top:58.8px">9</span><span class="c" style="left:90.0px;top:58.8px">10</span><span class="c" style="left:112.5px;top:58.8px">11</span><span class="c r" style="left:135.0px;top:58.8px">12</span><span class="c" style="left:0.0px;top:73.8px">13</span><span class="c" style="left:22.5px;top:73.8px">14</span><span class="c" style="left:45.0px;top:73.8px">15</span><span class="c" style="left:67.5px;top:73.8px">16</span><span class="c" style="left:90.0px;top:73.8px">17</span><span class="c" style="left:112.5px;top:73.8px">18</span><span class="c r" style="left:135.0px;top:73.8px">19</span><span class="c" style="left:0.0px;top:88.8px">20</span><span class="c" style="left:22.5px;top:88.8px">21</span><span class="c" style="left:45.0px;top:88.8px">22</span><span class="c" style="left:67.5px;top:88.8px">23</span><span class="c" style="left:90.0px;top:88.8px">24</span><span class="c" style="left:112.5px;top:88.8px">25</span><span class="c r" style="left:135.0px;top:88.8px">26</span><span class="c" style="left:0.0px;top:103.8px">27</span><span class="c" style="left:22.5px;top:103.8px">28</span><span class="c" style="left:45.0px;top:103.8px">29</span><span class="c" style="left:67.5px;top:103.8px">30</span><span class="c" style="left:90.0px;top:103.8px">31</span>
</div>
<div class="mo" style="left:809px;top:300px">
<div class="mt">Август</div>
<span class="c w" style="left:0.0px;top:28.8px">пн</span><span class="c w" style="left:22.5px;top:28.8px">вт</span><span class="c w" style="left:45.0px;top:28.8px">ср</span><span class="c w" style="left:67.5px;top:28.8px">чт</span><span class="c w" style="left:90.0px;top:28.8px">пт</span><span class="c w" style="left:112.5px;top:28.8px">сб</span><span class="c w s" style="left:135.0px;top:28.8px">вс</span><span class="c" style="left:112.5px;top:43.8px">1</span><span class="c r" style="left:135.0px;top:43.8px">2</span><span class="c" style="left:0.0px;top:58.8px">3</span><span class="c" style="left:22.5px;top:58.8px">4</span><span class="c" style="left:45.0px;top:58.8px">5</span><span class="c" style="left:67.5px;top:58.8px">6</span><span class="c" style="left:90.0px;top:58.8px">7</span><span class="c" style="left:112.5px;top:58.8px">8</span><span class="c r" style="left:135.0px;top:58.8px">9</span><span class="c" style="left:0.0px;top:73.8px">10</span><span class="c" style="left:22.5px;top:73.8px">11</span><span class="c" style="left:45.0px;top:73.8px">12</span><span class="c" style="left:67.5px;top:73.8px">13</span><span class="c" style="left:90.0px;top:73.8px">14</span><span class="c" style="left:112.5px;top:73.8px">15</span><span class="c r" style="left:135.0px;top:73.8px">16</span><span class="c" style="left:0.0px;top:88.8px">17</span><span class="c" style="left:22.5px;top:88.8px">18</span><span class="c" style="left:45.0px;top:88.8px">19</span><span class="c" style="left:67.5px;top:88.8px">20</span><span class="c" style="left:90.0px;top:88.8px">21</span><span class="c" style="left:112.5px;top:88.8px">22</span><span class="c r" style="left:135.0px;top:88.8px">23</span><span class="c" style="left:0.0px;top:103.8px">24</span><span class="c" style="left:22.5px;top:103.8px">25</span><span class="c" style="left:45.0px;top:103.8px">26</span><span class="c" style="left:67.5px;top:103.8px">27</span><span class="c" style="left:90.0px;top:103.8px">28</span><span class="c" style="left:112.5px;top:103.8px">29</span><span class="c r" style="left:135.0px;top:103.8px">30</span><span class="c" style="left:0.0px;top:118.8px">31</span>
</div>
<div class="mo" style="left:809px;top:435px">
<div class="mt">Сентябрь</div>
<span class="c w" style="left:0.0px;top:28.8px">пн</span><span class="c w" style="left:22.5px;top:28.8px">вт</span><span class="c w" style="left:45.0px;top:28.8px">ср</span><span class="c w" style="left:67.5px;top:28.8px">чт</span><span class="c w" style="left:90.0px;top:28.8px">пт</span><span class="c w" style="left:112.5px;top:28.8px">сб</span><span class="c w s" style="left:135.0px;top:28.8px">вс</span><span class="c" style="left:22.5px;top:43.8px">1</span><span class="c" style="left:45.0px;top:43.8px">2</span><span class="c" style="left:67.5px;top:43.8px">3</span><span class="c" style="left:90.0px;top:43.8px">4</span><span class="c" style="left:112.5px;top:43.8px">5</span><span class="c r" style="left:135.0px;top:43.8px">6</span><span class="c" style="left:0.0px;top:58.8px">7</span><span class="c" style="left:22.5px;top:58.8px">8</span><span class="c" style="left:45.0px;top:58.8px">9</span><span class="c" style="left:67.5px;top:58.8px">10</span><span class="c" style="left:90.0px;top:58.8px">11</span><span class="c" style="left:112.5px;top:58.8px">12</span><span class="c r" style="left:135.0px;top:58.8px">13</span><span class="c" style="left:0.0px;top:73.8px">14</span><span class="c" style="left:22.5px;top:73.8px">15</span><span class="c" style="left:45.0px;top:73.8px">16</span><span class="c" style="left:67.5px;top:73.8px">17</span><span class="c" style="left:90.0px;top:73.8px">18</span><span class="c" style="left:112.5px;top:73.8px">19</span><span class="c r" style="left:135.0px;top:73.8px">20</span><span class="c" style="left:0.0px;top:88.8px">21</span><span class="c" style="left:22.5px;top:88.8px">22</span><span class="c" style="left:45.0px;top:88.8px">23</span><span class="c" style="left:67.5px;top:88.8px">24</span><span class="c" style="left:90.0px;top:88.8px">25</span><span class="c" style="left:112.5px;top:88.8px">26</span><span class="c r" style="left:135.0px;top:88.8px">27</span><span class="c" style="left:0.0px;top:103.8px">28</span><span class="c" style="left:22.5px;top:103.8px">29</span><span class="c" style="left:45.0px;top:103.8px">30</span>
</div>
<div class="mo" style="left:809px;top:570px">
<div class="mt">Октябрь</div>
<span class="c w" style="left:0.0px;top:28.8px">пн</span><span class="c w" style="left:22.5px;top:28.8px">вт</span><span class="c w" style="left:45.0px;top:28.8px">ср</span><span class="c w" style="left:67.5px;top:28.8px">чт</span><span class="c w" style="left:90.0px;top:28.8px">пт</span><span class="c w" style="left:112.5px;top:28.8px">сб</span><span class="c w s" style="left:135.0px;top:28.8px">вс</span><span class="c" style="left:67.5px;top:43.8px">1</span><span class="c" style="left:90.0px;top:43.8px">2</span><span class="c" style="left:112.5px;top:43.8px">3</span><span class="c r" style="left:135.0px;top:43.8px">4</span><span class="c" style="left:0.0px;top:58.8px">5</span><span class="c" style="left:22.5px;top:58.8px">6</span><span class="c" style="left:45.0px;top:58.8px">7</span><span class="c" style="left:67.5px;top:58.8px">8</span><span class="c" style="left:90.0px;top:58.8px">9</span><span class="c" style="left:112.5px;top:58.8px">10</span><span class="c r" style="left:135.0px;top:58.8px">11</span><span class="c" style="left:0.0px;top:73.8px">12</span><span class="c" style="left:22.5px;top:73.8px">13</span><span class="c" style="left:45.0px;top:73.8px">14</span><span class="c" style="left:67.5px;top:73.8px">15</span><span class="c" style="left:90.0px;top:73.8px">16</span><span class="c" style="left:112.5px;top:73.8px">17</span><span class="c r" style="left:135.0px;top:73.8px">18</span><span class="c" style="left:0.0px;top:88.8px">19</span><span class="c" style="left:22.5px;top:88.8px">20</span><span class="c" style="left:45.0px;top:88.8px">21</span><span class="c" style="left:67.5px;top:88.8px">22</span><span class="c" style="left:90.0px;top:88.8px">23</span><span class="c" style="left:112.5px;top:88.8px">24</span><span class="c r" style="left:135.0px;top:88.8px">25</span><span class="c" style="left:0.0px;top:103.8px">26</span><span class="c" style="left:22.5px;top:103.8px">27</span><span class="c" style="left:45.0px;top:103.8px">28</span><span class="c" style="left:67.5px;top:103.8px">29</span><span class="c" style="left:90.0px;top:103.8px">30</span><span class="c" style="left:112.5px;top:103.8px">31</span>
</div>
<div class="mo" style="left:809px;top:705px">
<div class="mt">Ноябрь</div>
<span class="c w" style="left:0.0px;top:28.8px">пн</span><span class="c w" style="left:22.5px;top:28.8px">вт</span><span class="c w" style="left:45.0px;top:28.8px">ср</span><span class="c w" style="left:67.5px;top:28.8px">чт</span><span class="c w" style="left:90.0px;top:28.8px">пт</span><span class="c w" style="left:112.5px;top:28.8px">сб</span><span class="c w s" style="left:135.0px;top:28.8px">вс</span><span class="c r" style="left:135.0px;top:43.8px">1</span><span class="c" style="left:0.0px;top:58.8px">2</span><span class="c" style="left:22.5px;top:58.8px">3</span><span class="c" style="left:45.0px;top:58.8px">4</span><span class="c" style="left:67.5px;top:58.8px">5</span><span class="c" style="left:90.0px;top:58.8px">6</span><span class="c r" style="left:112.5px;top:58.8px">7</span><span class="c r" style="left:135.0px;top:58.8px">8</span><span class="c" style="left:0.0px;top:73.8px">9</span><span class="c" style="left:22.5px;top:73.8px">10</span><span class="c" style="left:45.0px;top:73.8px">11</span><span class="c" style="left:67.5px;top:73.8px">12</span><span class="c" style="left:90.0px;top:73.8px">13</span><span class="c" style="left:112.5px;top:73.8px">14</span><span class="c r" style="left:135.0px;top:73.8px">15</span><span class="c" style="left:0.0px;top:88.8px">16</span><span class="c" style="left:22.5px;top:88.8px">17</span><span class="c" style="left:45.0px;top:88.8px">18</span><span class="c" style="left:67.5px;top:88.8px">19</span><span class="c" style="left:90.0px;top:88.8px">20</span><span class="c" style="left:112.5px;top:88.8px">21</span><span class="c r" style="left:135.0px;top:88.8px">22</span><span class="c" style="left:0.0px;top:103.8px">23</span><span class="c" style="left:22.5px;top:103.8px">24</span><span class="c" style="left:45.0px;top:103.8px">25</span><span class="c" style="left:67.5px;top:103.8px">26</span><span class="c" style="left:90.0px;top:103.8px">27</span><span class="c" style="left:112.5px;top:103.8px">28</span><span class="c r" style="left:135.0px;top:103.8px">29</span><span class="c" style="left:0.0px;top:118.8px">30</span>
</div>
<div class="mo" style="left:809px;top:840px">
<div class="mt">Декабрь</div>
<span class="c w" style="left:0.0px;top:28.8px">пн</span><span class="c w" style="left:22.5px;top:28.8px">вт</span><span class="c w" style="left:45.0px;top:28.8px">ср</span><span class="c w" style="left:67.5px;top:28.8px">чт</span><span class="c w" style="left:90.0px;top:28.8px">пт</span><span class="c w" style="left:112.5px;top:28.8px">сб</span><span class="c w s" style="left:135.0px;top:28.8px">вс</span><span class="c" style="left:22.5px;top:43.8px">1</span><span class="c" style="left:45.0px;top:43.8px">2</span><span class="c" style="left:67.5px;top:43.8px">3</span><span class="c" style="left:90.0px;top:43.8px">4</span><span class="c" style="left:112.5px;top:43.8px">5</span><span class="c r" style="left:135.0px;top:43.8px">6</span><span class="c" style="left:0.0px;top:58.8px">7</span><span class="c" style="left:22.5px;top:58.8px">8</span><span class="c" style="left:45.0px;top:58.8px">9</span><span class="c" style="left:67.5px;top:58.8px">10</span><span class="c" style="left:90.0px;top:58.8px">11</span><span class="c r" style="left:112.5px;top:58.8px">12</span><span class="c r" style="left:135.0px;top:58.8px">13</span><span class="c" style="left:0.0px;top:73.8px">14</span><span class="c" style="left:22.5px;top:73.8px">15</span><span class="c" style="left:45.0px;top:73.8px">16</span><span class="c" style="left:67.5px;top:73.8px">17</span><span class="c" style="left:90.0px;top:73.8px">18</span><span class="c" style="left:112.5px;top:73.8px">19</span><span class="c r" style="left:135.0px;top:73.8px">20</span><span class="c" style="left:0.0px;top:88.8px">21</span><span class="c" style="left:22.5px;top:88.8px">22</span><span class="c" style="left:45.0px;top:88.8px">23</span><span class="c" style="left:67.5px;top:88.8px">24</span><span class="c" style="left:90.0px;top:88.8px">25</span><span class="c" style="left:112.5px;top:88.8px">26</span><span class="c r" style="left:135.0px;top:88.8px">27</span><span class="c" style="left:0.0px;top:103.8px">28</span><span class="c" style="left:22.5px;top:103.8px">29</span><span class="c" style="left:45.0px;top:103.8px">30</span><span class="c" style="left:67.5px;top:103.8px">31</span>
</div><div id="status">
  <div class="abs" style="left:4px;top:1px;width:50px;height:14px;background:#262626"></div>
  <span class="abs" style="left:5.500px;top:4.800px;font-size:10.500px;line-height:13px;color:#e0e0e0;letter-spacing:-0.450px">66.67%</span>
  <svg class="chev" style="left:58px;top:8px" viewBox="0 0 9 6"><path d="M0.8 0.8 L4.5 4.6 L8.2 0.8" fill="none" stroke="#d4d4d4" stroke-width="1.300"/></svg>
  <div class="abs" style="left:73px;top:2px;width:41px;height:13px;background:#323232"></div>
  <svg class="abs" style="left:80px;top:5px" width="30" height="9" viewBox="0 0 30 9"><path d="M1 0.500 V8.500 M7 0.500 V8.500 L2.400 4.500 Z M26 0.500 V8.500" stroke="#5a5a5a" fill="#5a5a5a" stroke-width="1.200"/><path d="M25.600 0.500 V8.500 L21 4.500 Z" fill="#5a5a5a"/></svg>
  <div class="abs" style="left:114px;top:1px;width:41px;height:14px;background:#262626"></div>
  <span class="abs" style="left:117.500px;top:4.800px;font-size:10.500px;line-height:13px;color:#e0e0e0">1</span>
  <svg class="chev" style="left:158px;top:8px" viewBox="0 0 9 6"><path d="M0.8 0.8 L4.5 4.6 L8.2 0.8" fill="none" stroke="#d4d4d4" stroke-width="1.300"/></svg>
  <div class="abs" style="left:172px;top:2px;width:42px;height:13px;background:#323232"></div>
  <svg class="abs" style="left:178px;top:5px" width="30" height="9" viewBox="0 0 30 9"><path d="M3 0.500 V8.500 L7.600 4.500 Z M19 0.500 V8.500 L23.600 4.500 Z" fill="#5a5a5a"/><path d="M24.600 0.500 V8.500" stroke="#5a5a5a" stroke-width="1.200"/></svg>
  <div class="abs" style="left:215px;top:2px;width:198px;height:13px;background:#303030"></div>
  <span class="abs" style="left:215px;top:4px;width:198px;text-align:center;font-size:10px;line-height:13px;color:#a8a8a8">Toggle Selection</span>
  <svg class="abs" style="left:419px;top:4px" width="8" height="10" viewBox="0 0 8 10"><path d="M1 0.500 V9.500 L7 5 Z" fill="#d8d8d8"/></svg>
  <svg class="abs" style="left:438px;top:5px" width="6" height="8" viewBox="0 0 6 8"><path d="M4.600 0.800 L1.400 4 L4.600 7.200" fill="none" stroke="#8a8a8a" stroke-width="1.200"/></svg>
  <div class="abs" style="left:987px;top:3px;width:25px;height:11px;border-radius:6px;background:#404040"></div>
</div>
</body></html>
